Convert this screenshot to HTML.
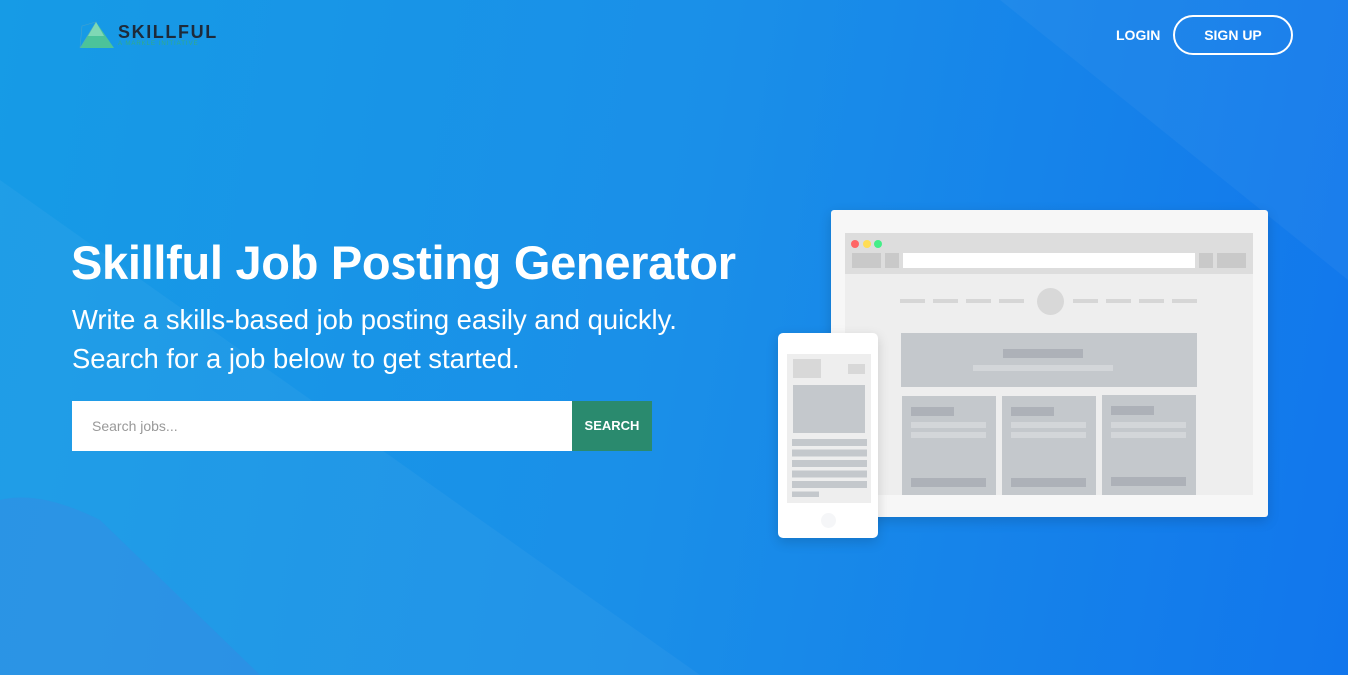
<!DOCTYPE html>
<html><head><style>
*{margin:0;padding:0;box-sizing:border-box}
body{width:1348px;height:675px;overflow:hidden;font-family:"Liberation Sans",sans-serif;position:relative;background:linear-gradient(100deg,#169be6 0%,#1a8fe8 50%,#1176ec 100%)}
.a{position:absolute}
.g{background:#c4c8cc}
.d{background:#adb1b8}
.l{background:#d3d6d9}
</style></head><body>
<svg class="a" style="left:0;top:0" width="1348" height="675">
<polygon points="0,0 1000,0 1348,280 1348,0" fill="#ffffff" opacity="0.04"/>
<polygon points="0,180 0,675 700,675" fill="#ffffff" opacity="0.04"/>
<path d="M0,500 Q40,490 100,520 L260,675 L0,675Z" fill="#4a7de0" opacity="0.25"/>
</svg>
<svg class="a" style="left:74px;top:20px" width="44" height="30"><polygon points="22,2 40,28 6,28" fill="#4cc39a"/><polygon points="22,2 30,16 14,16" fill="#7fd8b5"/><polygon points="8,6 22,2 6,28" fill="none" stroke="#6ab" stroke-width="0.6" opacity=".6"/></svg>
<div class="a" style="left:118px;top:22px;font-size:18px;font-weight:bold;color:#1e2a3a;letter-spacing:1.6px">SKILLFUL</div>
<div class="a" style="left:118px;top:41px;font-size:6px;color:#3a8;letter-spacing:1px">A MARKLE INITIATIVE</div>
<div class="a" style="left:1116px;top:27px;color:#fff;font-weight:bold;font-size:14px">LOGIN</div>
<div class="a" style="left:1173px;top:15px;width:120px;height:40px;border:2px solid #fff;border-radius:20px;color:#fff;font-weight:bold;font-size:14px;text-align:center;line-height:36px">SIGN UP</div>
<div class="a" style="left:71px;top:235px;color:#fff;font-size:47px;font-weight:bold;letter-spacing:-0.3px">Skillful Job Posting Generator</div>
<div class="a" style="left:72px;top:300px;color:#fff;font-size:27.4px;line-height:39px;font-weight:300">Write a skills-based job posting easily and quickly.<br>Search for a job below to get started.</div>
<div class="a" style="left:72px;top:401px;width:500px;height:50px;background:#fff;color:#999;font-size:14px;line-height:50px;padding-left:20px">Search jobs...</div>
<div class="a" style="left:572px;top:401px;width:80px;height:50px;background:#2a8a6e;color:#fff;font-size:13px;font-weight:bold;line-height:50px;text-align:center">SEARCH</div>
<div class="a" style="left:831px;top:210px;width:437px;height:307px;background:#f7f7f7;border-radius:3px;box-shadow:0 4px 12px rgba(0,0,0,.15)"></div>
<div class="a" style="left:845px;top:233px;width:408px;height:262px;background:#eeeeee"></div>
<div class="a" style="left:845px;top:233px;width:408px;height:41px;background:#dddddd"></div>
<div class="a" style="left:851px;top:240px;width:8px;height:8px;border-radius:50%;background:#f66"></div>
<div class="a" style="left:863px;top:240px;width:8px;height:8px;border-radius:50%;background:#fd5"></div>
<div class="a" style="left:874px;top:240px;width:8px;height:8px;border-radius:50%;background:#4e8"></div>
<div class="a" style="left:852px;top:253px;width:29px;height:15px;background:#c9c9c9"></div>
<div class="a" style="left:885px;top:253px;width:14px;height:15px;background:#c9c9c9"></div>
<div class="a" style="left:903px;top:253px;width:292px;height:15px;background:#fff"></div>
<div class="a" style="left:1199px;top:253px;width:14px;height:15px;background:#c9c9c9"></div>
<div class="a" style="left:1217px;top:253px;width:29px;height:15px;background:#c9c9c9"></div>
<div class="a" style="left:900px;top:299px;width:126px;height:4px;background:repeating-linear-gradient(90deg,#d6d6d6 0 25px,transparent 25px 33px)"></div>
<div class="a" style="left:1073px;top:299px;width:126px;height:4px;background:repeating-linear-gradient(90deg,#d6d6d6 0 25px,transparent 25px 33px)"></div>
<div class="a" style="left:1037px;top:288px;width:27px;height:27px;border-radius:50%;background:#d8d8d8"></div>
<div class="a g" style="left:901px;top:333px;width:296px;height:54px"></div>
<div class="a d" style="left:1003px;top:349px;width:80px;height:9px"></div>
<div class="a l" style="left:973px;top:365px;width:140px;height:6px"></div>
<div class="a g" style="left:902px;top:396px;width:94px;height:99px"></div>
<div class="a g" style="left:1002px;top:396px;width:94px;height:99px"></div>
<div class="a g" style="left:1102px;top:395px;width:94px;height:100px"></div>
<div class="a d" style="left:911px;top:407px;width:43px;height:9px"></div>
<div class="a d" style="left:1011px;top:407px;width:43px;height:9px"></div>
<div class="a d" style="left:1111px;top:406px;width:43px;height:9px"></div>
<div class="a l" style="left:911px;top:422px;width:75px;height:6px"></div><div class="a l" style="left:911px;top:432px;width:75px;height:6px"></div>
<div class="a l" style="left:1011px;top:422px;width:75px;height:6px"></div><div class="a l" style="left:1011px;top:432px;width:75px;height:6px"></div>
<div class="a l" style="left:1111px;top:422px;width:75px;height:6px"></div><div class="a l" style="left:1111px;top:432px;width:75px;height:6px"></div>
<div class="a d" style="left:911px;top:478px;width:75px;height:9px"></div>
<div class="a d" style="left:1011px;top:478px;width:75px;height:9px"></div>
<div class="a d" style="left:1111px;top:477px;width:75px;height:9px"></div>
<div class="a" style="left:778px;top:333px;width:100px;height:205px;background:#fff;border-radius:5px;box-shadow:0 4px 12px rgba(0,0,0,.15)"></div>
<div class="a" style="left:787px;top:354px;width:84px;height:149px;background:#eeeeee"></div>
<div class="a" style="left:793px;top:359px;width:28px;height:19px;background:#d8d8d8"></div>
<div class="a" style="left:848px;top:364px;width:17px;height:10px;background:#d8d8d8"></div>
<div class="a g" style="left:793px;top:385px;width:72px;height:48px"></div>
<div class="a" style="left:792px;top:439px;width:75px;height:58px;background:repeating-linear-gradient(180deg,#c4c8cc 0 7px,transparent 7px 10.5px)"></div>
<div class="a" style="left:819px;top:490px;width:50px;height:8px;background:#eee"></div>
<div class="a" style="left:821px;top:513px;width:15px;height:15px;border-radius:50%;background:#f5f6f8"></div>
</body></html>
